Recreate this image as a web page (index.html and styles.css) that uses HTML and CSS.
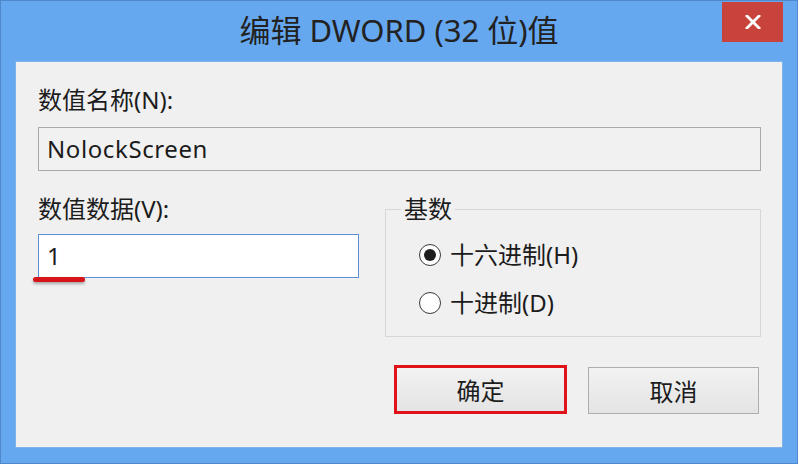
FILE: index.html
```html
<!DOCTYPE html>
<html lang="zh-CN">
<head>
  <meta charset="UTF-8">
  <meta name="viewport" content="width=device-width, initial-scale=1.0">
  <title>编辑 DWORD (32 位)值</title>
  <link rel="stylesheet" href="styles.css">
</head>
<body>
  <div class="window">
    <div class="titlebar">
      <span></span>
      <div class="title">编辑 DWORD (32 位)值</div>
      <div class="close">
        <svg width="16" height="14" viewBox="0 0 16 14">
          <path d="M2 1 L14 13 M14 1 L2 13" stroke="#fff" stroke-width="2.8" stroke-linecap="square"></path>
        </svg>
      </div>
    </div>

    <div class="panel">
      <div class="label">数值名称(N):</div>
      <div class="textbox readonly">NolockScreen</div>

      <div class="row">
        <div class="col">
          <div class="label">数值数据(V):</div>
          <div class="textbox focused">
            1
            <span class="mark"></span>
          </div>
        </div>

        <fieldset class="group">
          <legend>基数</legend>
          <div class="radios">
            <label class="radio"><span class="dot checked"></span>十六进制(H)</label>
            <label class="radio"><span class="dot"></span>十进制(D)</label>
          </div>
        </fieldset>
      </div>

      <div class="buttons">
        <div class="btn btn-ok">确定</div>
        <div class="btn">取消</div>
      </div>
    </div>
  </div>
</body>
</html>
```

FILE: styles.css
```css
body {
  margin: 0;
  padding: 0;
  font-family: "Noto Sans", "Noto Sans CJK SC", sans-serif;
  color: #1c1c1c;
}

.window {
  width: 798px;
  height: 464px;
  box-sizing: border-box;
  border: 1px solid #4f89cc;
  background-color: #66a8f0;
  display: flex;
  flex-direction: column;
}

.titlebar {
  height: 60px;
  display: grid;
  grid-template-columns: 1fr auto 1fr;
  align-items: start;
}

.title {
  font-size: 31px;
  line-height: 60px;
  color: #222;
  margin-top: -1px;
}

.close {
  justify-self: end;
  margin: 1px 14px 0 0;
  width: 61px;
  height: 40px;
  background-color: #c8433b;
  display: flex;
  justify-content: center;
  align-items: center;
}

.panel {
  flex: 1;
  margin: 0 14px 15px 14px;
  background-color: #f0f0f0;
  border: 1px solid #7fb2ea;
  padding: 23px 21px 32px 22px;
  display: flex;
  flex-direction: column;
}

.label {
  font-size: 24px;
  line-height: 30px;
}

.textbox {
  position: relative;
  box-sizing: border-box;
  height: 44px;
  margin-top: 12px;
  padding: 0 8px;
  font-size: 24px;
  line-height: 42px;
  border: 1px solid #a9a9a9;
  background-color: #f1f1f1;
  letter-spacing: 0.6px;
}

.textbox.focused {
  margin-top: 10px;
  border-color: #5e90d4;
  background-color: #fff;
}

.mark {
  position: absolute;
  left: -6px;
  bottom: -5px;
  width: 52px;
  height: 5px;
  border-radius: 3px;
  background-color: #d8141b;
  box-shadow: 0 2px 3px rgba(0, 0, 0, 0.3);
}

.row {
  margin-top: 23px;
  display: grid;
  grid-template-columns: 321px 376px;
  column-gap: 26px;
  align-items: start;
}

.group {
  margin: 0;
  padding: 0 0 18px 15px;
  border: 1px solid #d6d6d6;
  min-width: 0;
}

.group legend {
  padding: 0 3px;
  font-size: 24px;
  line-height: 30px;
}

.radios {
  margin: 16px 0 0 18px;
  display: flex;
  flex-direction: column;
  gap: 18px;
}

.radio {
  display: flex;
  align-items: center;
  gap: 9px;
  font-size: 24px;
  line-height: 30px;
}

.dot {
  width: 20px;
  height: 20px;
  border: 1.5px solid #3a3a3a;
  border-radius: 50%;
  background-color: #fff;
  display: flex;
  justify-content: center;
  align-items: center;
}

.dot.checked::after {
  content: "";
  width: 12px;
  height: 12px;
  border-radius: 50%;
  background-color: #1e1e1e;
}

.buttons {
  margin-top: 28px;
  margin-right: 2px;
  display: flex;
  justify-content: flex-end;
  align-items: flex-end;
  gap: 21px;
}

.btn {
  box-sizing: border-box;
  width: 171px;
  height: 47px;
  border: 1px solid #adadad;
  background: linear-gradient(#f2f2f2, #e4e4e4);
  font-size: 24px;
  display: flex;
  justify-content: center;
  align-items: center;
}

.btn-ok {
  width: 173px;
  height: 49px;
  border: 3px solid #e0121a;
}
```
